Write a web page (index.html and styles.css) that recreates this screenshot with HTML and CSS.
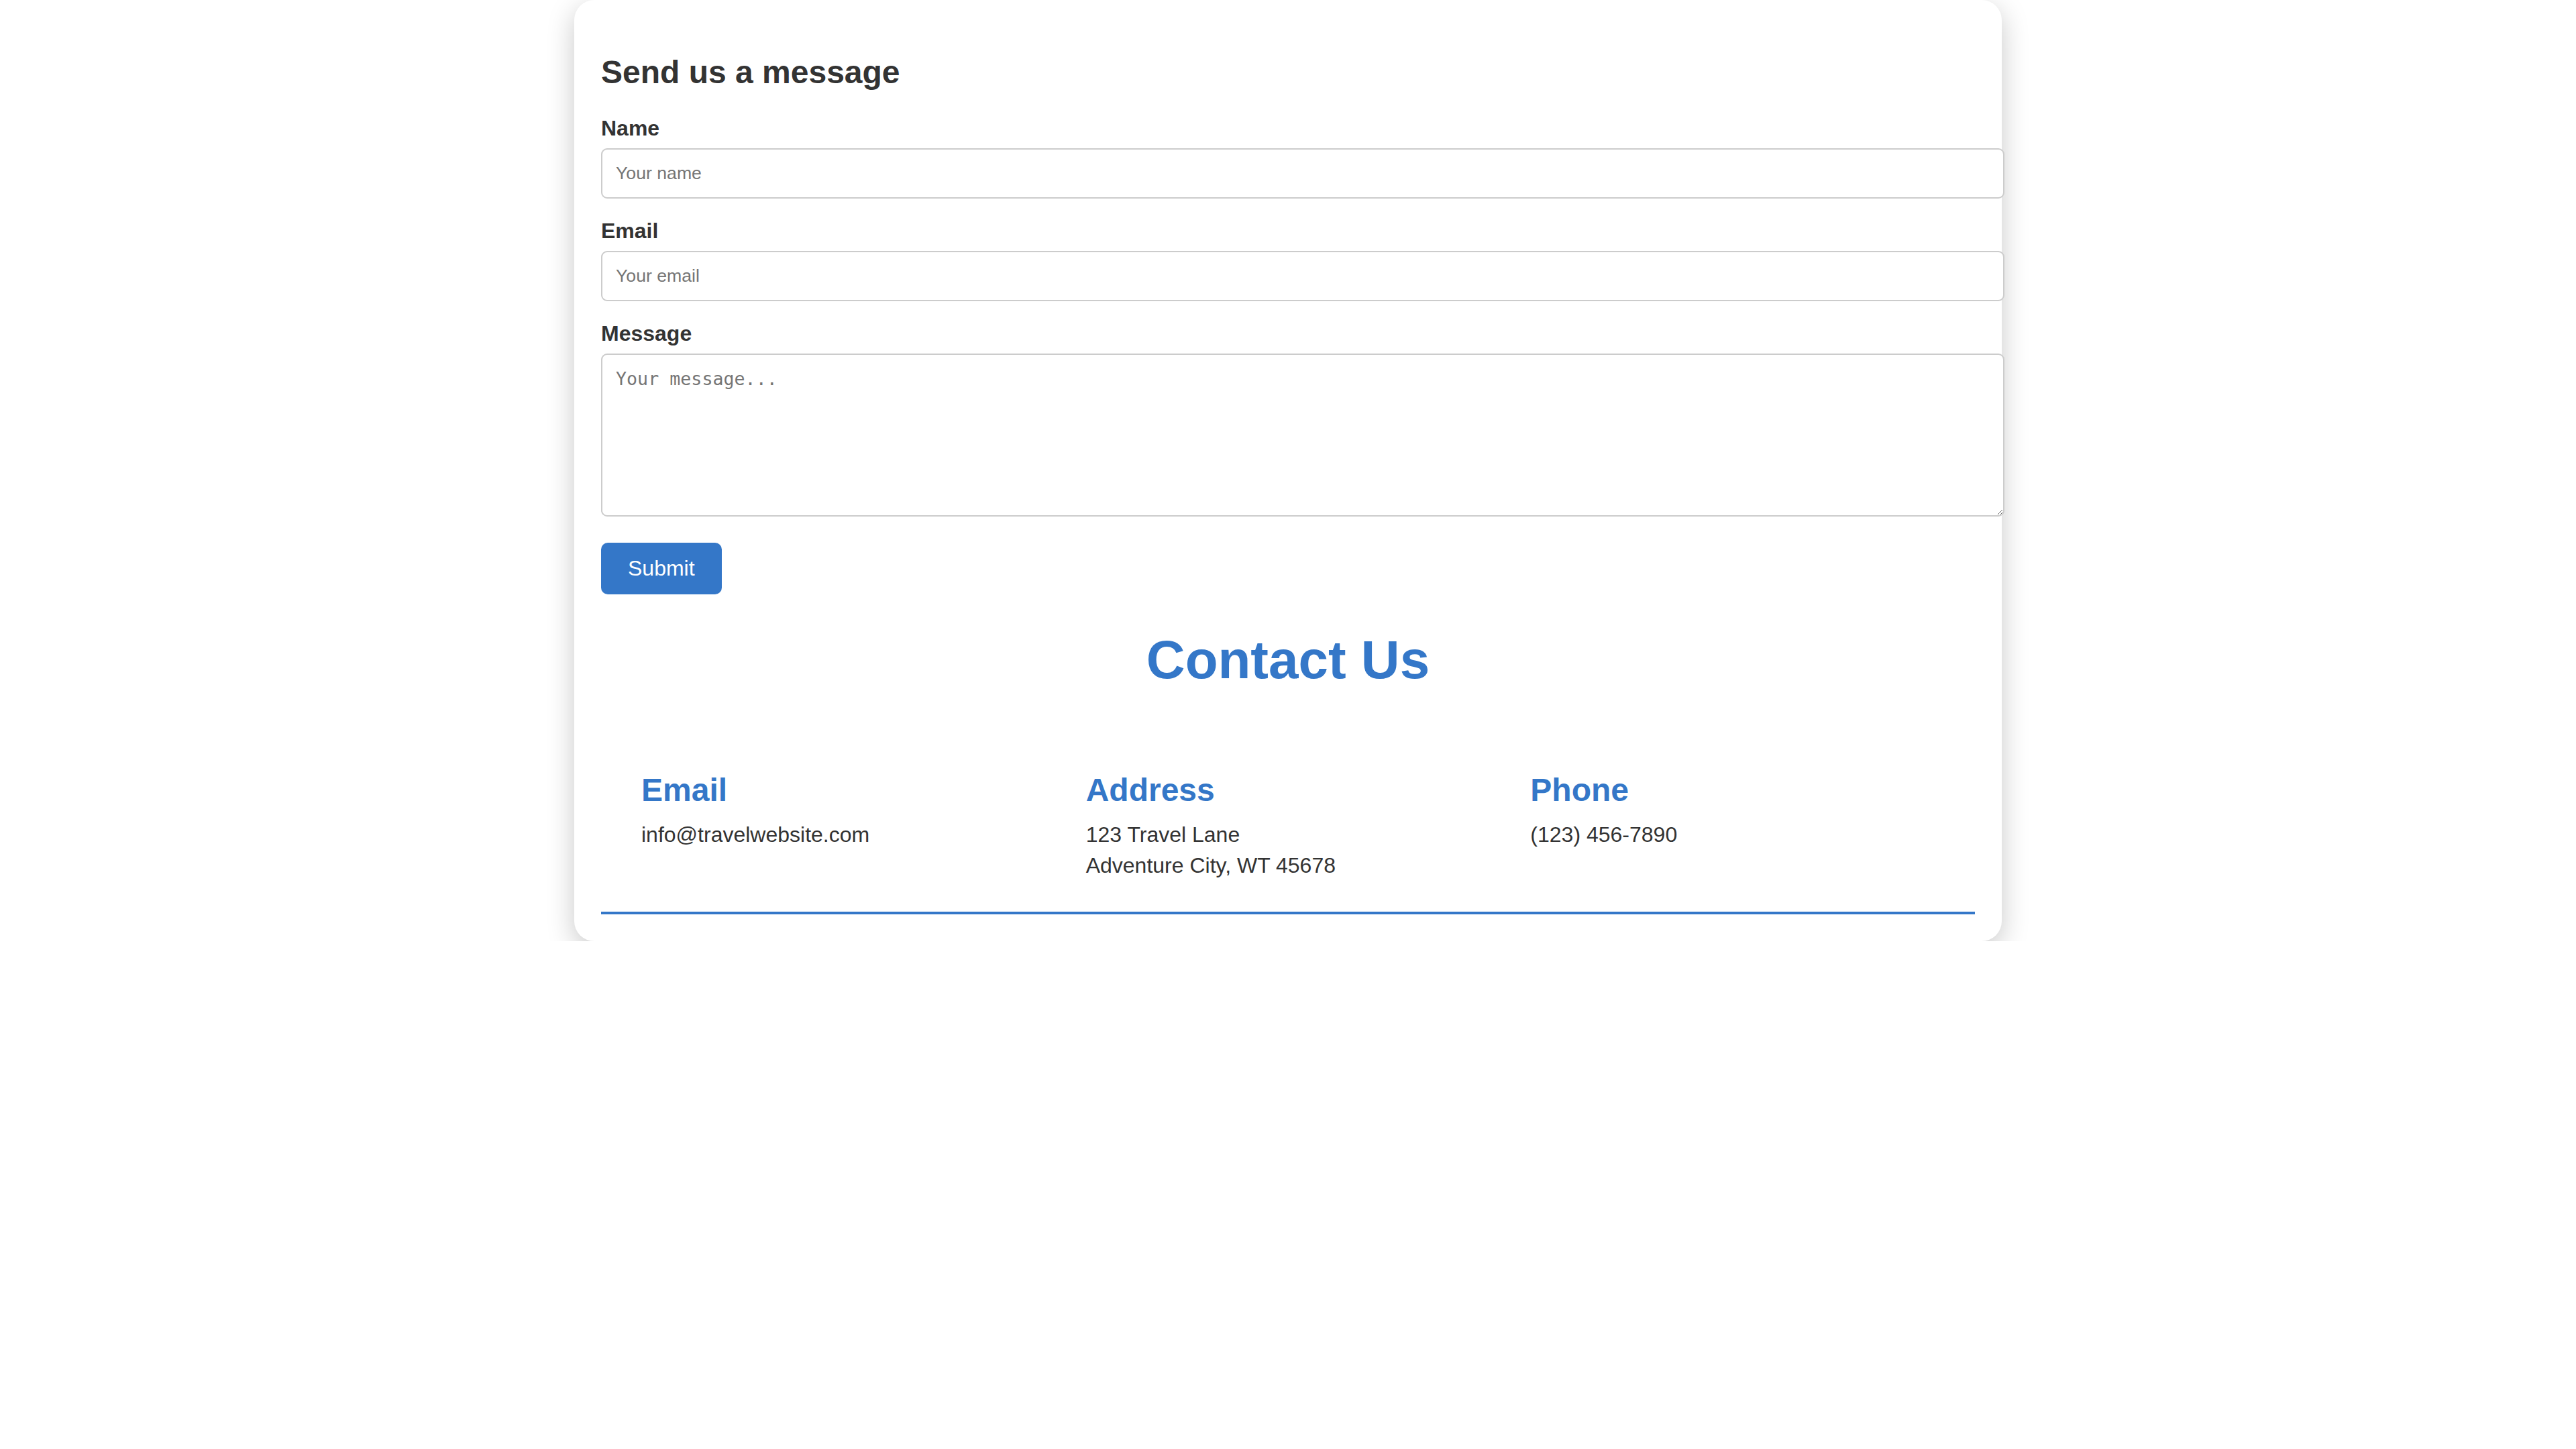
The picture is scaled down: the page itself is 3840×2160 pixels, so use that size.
FILE: index.html
```html
<!DOCTYPE html>
<html lang="en">
<head>
<meta charset="utf-8">
<title>Contact Us</title>
<link rel="stylesheet" href="styles.css">
</head>
<body>
  <div class="card">
    <form class="contact-form">
      <h2 class="form-title">Send us a message</h2>
      <div class="form-group">
        <label class="field-label" for="name">Name</label>
        <input class="field-input" id="name" type="text" placeholder="Your name">
      </div>
      <div class="form-group">
        <label class="field-label" for="email">Email</label>
        <input class="field-input" id="email" type="email" placeholder="Your email">
      </div>
      <div class="form-group">
        <label class="field-label" for="message">Message</label>
        <textarea class="field-textarea" id="message" placeholder="Your message..."></textarea>
      </div>
      <button class="submit-btn" type="button">Submit</button>
    </form>

    <h1 class="contact-title">Contact Us</h1>

    <div class="info">
      <div class="info-col">
        <h3 class="info-title">Email</h3>
        <p class="info-text">info@travelwebsite.com</p>
      </div>
      <div class="info-col">
        <h3 class="info-title">Address</h3>
        <p class="info-text">123 Travel Lane<br>Adventure City, WT 45678</p>
      </div>
      <div class="info-col">
        <h3 class="info-title">Phone</h3>
        <p class="info-text">(123) 456-7890</p>
      </div>
    </div>
  </div>
</body>
</html>
```

FILE: styles.css
```css
html, body {
  margin: 0;
  padding: 0;
  background: #ffffff;
}

body {
  font-family: "Liberation Sans", Arial, sans-serif;
  color: #333333;
  font-size: 32px;
}

.card {
  width: 2048px;
  margin: 0 auto;
  padding: 40px;
  background: #ffffff;
  border-radius: 30px;
  box-shadow: 0 12px 40px rgba(0, 0, 0, 0.22);
}

.contact-form {
  display: block;
}

.form-title {
  font-size: 48px;
  font-weight: bold;
  color: #333333;
  margin: 40px 0 38px;
  line-height: normal;
}

.form-group {
  margin-bottom: 30px;
}

.field-label {
  display: block;
  font-weight: bold;
  font-size: 32px;
  line-height: normal;
  color: #333333;
  margin-bottom: 11px;
}

.field-input,
.field-textarea {
  display: block;
  box-sizing: content-box;
  width: 100%;
  margin: 0;
  padding: 20px;
  border: 2px solid #cccccc;
  border-radius: 9px;
  background: #ffffff;
  color: #333333;
  outline: none;
}

.field-input {
  font-family: "Liberation Sans", Arial, sans-serif;
  font-size: 26.67px;
  line-height: normal;
}

.field-textarea {
  font-family: "DejaVu Sans Mono", monospace;
  font-size: 26.67px;
  height: 199px;
  resize: vertical;
}

.field-input::placeholder,
.field-textarea::placeholder {
  color: #757575;
}

.form-group:last-of-type {
  margin-bottom: 39px;
}

.submit-btn {
  display: inline-block;
  font-family: "Liberation Sans", Arial, sans-serif;
  font-size: 32px;
  line-height: normal;
  color: #ffffff;
  background: #3477c8;
  border: none;
  border-radius: 10px;
  padding: 20px 40px;
  margin: 0;
  vertical-align: top;
}

.contact-title {
  text-align: center;
  font-size: 80px;
  font-weight: bold;
  line-height: normal;
  color: #3477c8;
  margin: 52px 0 50px;
}

.info {
  display: flex;
  padding: 0 30px;
  border-bottom: 4px solid #3477c8;
}

.info-col {
  flex: 1 1 0;
  padding: 30px;
}

.info-title {
  font-size: 48px;
  font-weight: bold;
  line-height: normal;
  color: #3477c8;
  margin: 40px 0 0;
}

.info-text {
  font-size: 32px;
  line-height: 46px;
  color: #333333;
  margin: 16px 0;
}
```
